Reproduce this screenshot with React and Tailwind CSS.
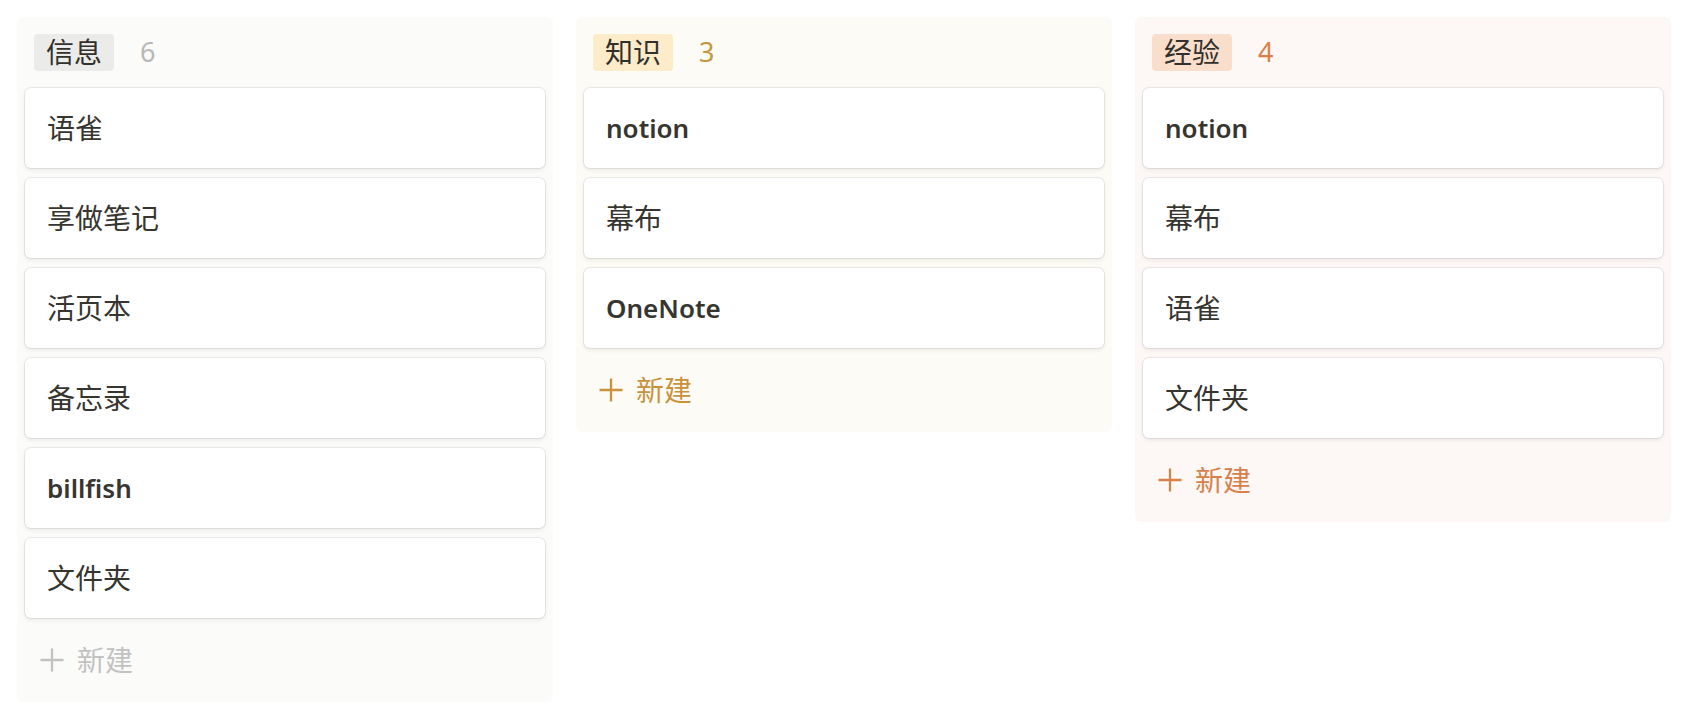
import React from 'react';

const columns = [
  {
    name: '信息',
    count: 6,
    colBg: 'bg-[#fbfbfa]',
    tagBg: 'bg-[#ebebea]',
    countColor: 'text-[#b8b8b6]',
    addColor: 'text-[#c2c2c0]',
    items: [
      { title: '语雀' },
      { title: '享做笔记' },
      { title: '活页本' },
      { title: '备忘录' },
      { title: 'billfish', bold: true },
      { title: '文件夹' },
    ],
  },
  {
    name: '知识',
    count: 3,
    colBg: 'bg-[#fcfbf6]',
    tagBg: 'bg-[#fdebc9]',
    countColor: 'text-[#c6963f]',
    addColor: 'text-[#c9913a]',
    items: [
      { title: 'notion', bold: true },
      { title: '幕布' },
      { title: 'OneNote', bold: true },
    ],
  },
  {
    name: '经验',
    count: 4,
    colBg: 'bg-[#fdf8f6]',
    tagBg: 'bg-[#f9dfcb]',
    countColor: 'text-[#d9814a]',
    addColor: 'text-[#d8804a]',
    items: [
      { title: 'notion', bold: true },
      { title: '幕布' },
      { title: '语雀' },
      { title: '文件夹' },
    ],
  },
];

const PlusIcon = () => (
  <svg width="24" height="24" viewBox="0 0 24 24" fill="none">
    <path d="M12 0.5v23M0.5 12h23" stroke="currentColor" strokeWidth="2.3" />
  </svg>
);

const Card = ({ item }) => (
  <div className="h-[80px] flex items-center px-[22px] bg-white rounded-[6px] shadow-[0_0_0_1px_rgba(15,15,15,0.07),0_2px_4px_rgba(15,15,15,0.08)]">
    {item.bold ? (
      <span className="text-[26px] font-semibold text-[#37352f]">{item.title}</span>
    ) : (
      <span className="text-[28px] text-[#37352f]">{item.title}</span>
    )}
  </div>
);

const Column = ({ col }) => (
  <div className={`w-[536px] px-2 pb-[10px] rounded-[6px] ${col.colBg}`}>
    <div className="h-[71px] flex items-center pl-[9px]">
      <span className={`h-[37px] leading-[37px] px-[12px] rounded-[4px] text-[28px] text-[#32302c] ${col.tagBg}`}>
        {col.name}
      </span>
      <span className={`ml-[26px] text-[27px] ${col.countColor}`}>{col.count}</span>
    </div>

    <div className="flex flex-col gap-[10px]">
      {col.items.map((item, i) => (
        <Card key={i} item={item} />
      ))}
    </div>

    <div className={`mt-[10px] h-[64px] flex items-center pl-[15px] gap-[13px] ${col.addColor}`}>
      <PlusIcon />
      <span className="text-[28px]">新建</span>
    </div>
  </div>
);

export default function App() {
  return (
    <div
      className="min-h-screen w-full bg-white pl-[17px] pt-[17px] flex items-start gap-[23px]"
      style={{ fontFamily: '"Noto Sans", "Noto Sans CJK SC", sans-serif' }}
    >
      {columns.map((col) => (
        <Column key={col.name} col={col} />
      ))}
    </div>
  );
}
